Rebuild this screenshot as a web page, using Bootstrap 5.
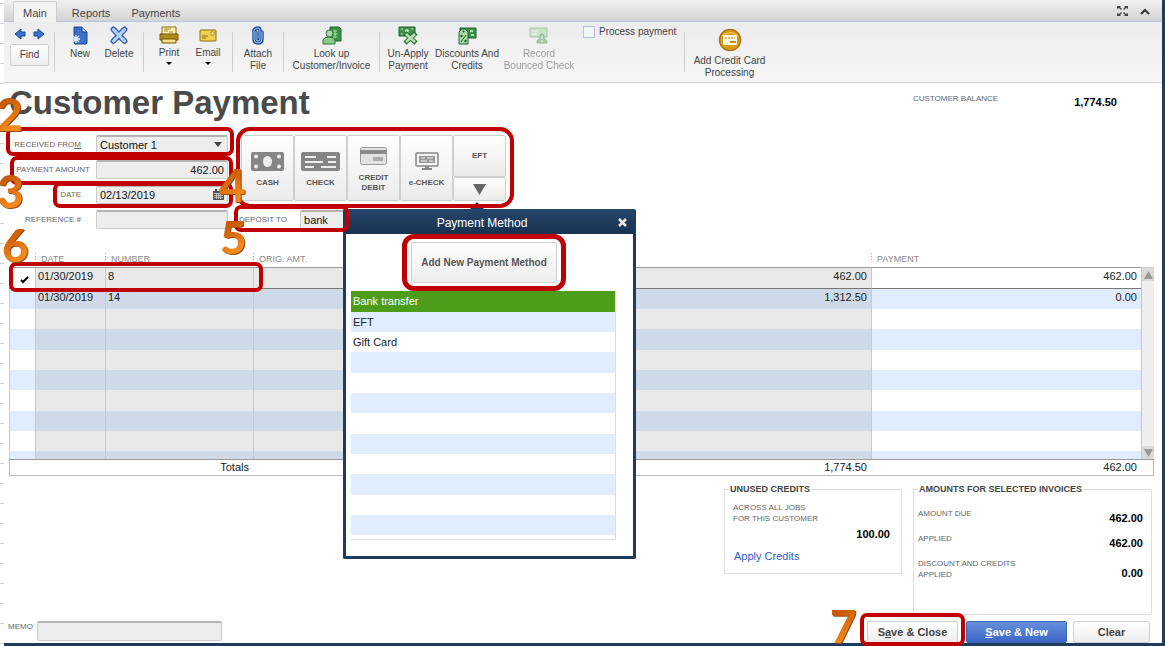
<!DOCTYPE html>
<html lang="en">
<head>
<meta charset="utf-8">
<meta name="viewport" content="width=device-width, initial-scale=1">
<title>Customer Payment</title>
<link href="https://cdn.jsdelivr.net/npm/bootstrap@5.3.0/dist/css/bootstrap.min.css" rel="stylesheet">
<style>
:root{--navy:#1d3d60;--ring:#c00000;--stripe:#e0edff;--fs-s:8px;--fs-h:9px;--fs-t:10px;--fs-m:11px}
body{font-family:"Liberation Sans",Arial,sans-serif;font-size:var(--fs-m);line-height:12px;color:#222;
 background:repeating-linear-gradient(#fff 0 3px,#d2d2d2 3px 4px,#fff 4px 20px);overflow-x:hidden}
.window{margin-left:4px;min-height:100vh;background:#fff;border-right:3px solid var(--navy);border-bottom:3px solid var(--navy)}
button{padding:0;font-family:inherit}
/* tabs */
.tabbar{height:22px;background:linear-gradient(#f1f1f1,#d3d3d3);border-bottom:1px solid #b9c7d8;padding-left:9px}
.tabbar .nav-link{padding:6px 10px 2px 11px;height:20px;color:#444;border-radius:2px 2px 0 0;line-height:12px;margin-top:1px}
.tabbar .nav-link.active{background:#f3f3f3;border:1px solid #ccc;border-bottom:0;padding:5px 9px 2px;height:21px;margin-right:4px}
/* toolbar */
.toolbar{height:61px;background:linear-gradient(#ececec,#f6f6f6);border-bottom:1px solid #cfcfcf;padding:4px 0 0 6px;font-size:var(--fs-t);color:#444}
.tool{border:0;background:none;color:inherit;line-height:12px;flex:none;text-align:center}
.tool svg{display:block;margin:0 auto 3px}
.tool-off{opacity:.5}
.w-s{width:38px}.w-m{width:40px}.w-l{width:72px}.w-x{width:85px}.w-u{width:46px}.w-c{width:79px}.w-p{width:96px}
.rule{width:1px;height:40px;background:#cdcdcd;margin:6px 5px 0;flex:none}
.down{display:block;width:0;margin:3px auto 0;border:3px solid transparent;border-top:3px solid #000}
.plain{border:1px solid #d0d0d0;border-radius:2px;background:linear-gradient(#fff,#ededed);color:#444}
.find{width:39px;height:22px;font-size:var(--fs-t);margin-top:4px}
.form-check-input.process{width:12px;height:12px;margin:0;border:1px solid #b4bee0;border-radius:0;background-color:#f5f5fd}
/* entry area */
.entry-area{padding-left:5px}
.heading{font-size:33px;line-height:40px;font-weight:700;color:#4a4a4a;margin:0}
.balance{gap:76px;margin-right:45px;padding-top:10px}
.cap{font-size:var(--fs-s);line-height:11px;color:#666}
.fields{width:219px;flex:none}
.field-row{height:18px;margin-bottom:7px}
.field-row .cap{width:72px;text-align:right;margin-right:15px;white-space:nowrap;flex:none}
.field-row .cap.wide{width:81px;margin-right:6px}
.entry.form-control,.entry.form-select{height:19px;min-height:0;padding:0 3px;border:1px solid #cbcbcb;border-top:2px solid #b3b3b3;border-radius:2px;background-color:#ededed;font-size:var(--fs-m);line-height:14px;color:#111}
.entry.form-select{background-position:right 5px center;background-size:8px 5px;
 background-image:url("data:image/svg+xml,%3Csvg xmlns='http://www.w3.org/2000/svg' viewBox='0 0 8 5'%3E%3Cpath d='M0 0h8L4 5z' fill='%23444'/%3E%3C/svg%3E")}
.cal{right:4px;top:4px}
.ring{position:absolute;border:4px solid var(--ring);border-radius:7px;pointer-events:none;z-index:6}
.ring-from{inset:-8px -6px -3px -3px}
.ring-amount{inset:-4px -5px -7px 1px}
.ring-date{inset:-3px -5px -5px 44px}
.ring-method{inset:-8px -8px -7px -5px;border-radius:14px}
.ring-deposit{inset:-5px 0 -4px -5px}
.ring-line{left:-1px;top:-6px;width:254px;height:30px}
.ring-add{inset:-8px -9px;border-width:5px;border-radius:12px}
.ring-save{inset:-8px -7px -3px}
.step{position:absolute;z-index:8;font:900 46px/36px Lato,sans-serif;color:transparent;background:linear-gradient(150deg,#c85a08 20%,#f58a1c 80%);-webkit-background-clip:text;background-clip:text;filter:drop-shadow(1px 1px 0 #9a4c10);pointer-events:none}
.step-2{left:-13px;top:-39px}.step-3{left:-12px;top:13px}.step-4{left:-22px;top:32px}
.step-5{left:-19px;top:9px}.step-6{left:-7px;top:-25px}.step-7{left:-37px;top:-13px}
.middle{margin-left:11px;width:267px}
.methods{margin-left:2px;height:66px}
.method{width:53px;height:66px;border:1px solid #cfcfcf;border-radius:2px;background:linear-gradient(#fefefe,#ebebeb);color:#555;font-size:var(--fs-s);font-weight:700;line-height:10px}
.method svg{display:block;margin:0 auto}
.method.half-a{height:42px}.method.half-b{height:24px}
.method .ico{height:26px;display:flex;align-items:center;justify-content:center;margin-bottom:4px}
.deposit{width:110px;height:18px;margin-top:9px}
.deposit .entry{width:49px;margin-left:13px}
/* payment method pop-up */
.popup{position:absolute;left:104px;top:74px;width:293px;border:3px solid var(--navy);border-top:0;background:#fff;z-index:5;border-radius:2px}
.popup::before{content:"";position:absolute;left:124px;top:-14px;border:7px solid transparent;border-bottom-color:var(--navy)}
.popup-head{height:25px;background:linear-gradient(#25466c,#183250);color:#fff;font-size:12px;margin:0 -1px;padding:2px 15px 0 0}
.popup-close{position:absolute;right:6px;top:9px;border:0;background:none;line-height:0}
.add-new{width:146px;height:41px;font-size:var(--fs-t);font-weight:700;color:#555}
.add-wrap{margin:8px 0 8px 65px;width:146px}
.choices{margin:0 17px 16px 5px;border-right:1px solid #ddd;border-bottom:1px solid #ddd;border-radius:0;padding-bottom:4px}
.choices .list-group-item{height:20px;padding:0 2px;border:0;border-radius:0;line-height:20px;color:#222;background:#fff}
.choices .list-group-item:nth-child(3n+1){height:21px}
.choices .list-group-item:nth-child(even){background:var(--stripe)}
.choices .list-group-item.active{background:#4e9d19;color:#fff}
/* invoices */
.sheet{margin:24px 8px 0 5px}
.invoices{width:100%;table-layout:fixed;border-collapse:separate;border-spacing:0}
.invoices th,.invoices td{padding:0 4px 0 2px;line-height:14px;vertical-align:top}
.invoices thead th{height:16px;font-size:var(--fs-h);font-weight:400;color:#8a8a8a;padding-left:6px;border-bottom:1px solid #999}
.invoices thead th+th:not(.bare){background:repeating-linear-gradient(#aaa 0 1px,transparent 1px 3px) 0 1px/1px 9px no-repeat}
.invoices thead th.last{border-bottom-color:#ccc}
.invoices tbody tr{height:20px}
.invoices tbody tr:nth-child(3n+1){height:21px}
.invoices tbody tr:last-child{height:8px}
.invoices tbody td{border-left:1px solid #c8c8c8;padding-top:1px}
.invoices tbody td.mid{background:#e9e9e9}
.invoices tbody tr:nth-child(even) td{background:var(--stripe)}
.invoices tbody tr:nth-child(even) td.mid{background:#cedae8}
.invoices tbody tr:first-child td:not(.bar){border-bottom:1px solid #777}
.invoices tbody td.bar{padding:0;background:#eee;height:191px}
.bar-inner{height:191px}
.bar-end{height:13px;background:#d9d9d9}
.invoices tfoot td{height:17px;border-top:1px solid #999;border-bottom:1px solid #bbb}
.invoices tfoot td:first-child{border-left:1px solid #bbb}
.invoices tfoot td:last-child{border-right:1px solid #bbb}
/* summary boxes */
.summary{margin:8px 10px 0 0;gap:11px}
.group{border:1px solid #e0e0e0;margin:0;padding:0 8px;font-size:var(--fs-s)}
.group legend{float:none;width:auto;font-size:var(--fs-h);line-height:10px;font-weight:700;color:#444;margin:0 0 0 -4px;padding:0 1px}
.g-a{width:178px;height:90px;padding-right:11px}
.g-b{width:239px;height:131px;padding:0 8px 0 4px}
.g-b legend{margin:0 0 14px}
.g-b .line{height:25px}
.line .figure-val{padding-top:4px}
.line .figure-val.low{padding-top:9px}
.figure-val{font-size:var(--fs-m);font-weight:700;color:#000}
.apply{color:#2c5cc5;text-decoration:none;font-size:var(--fs-m);margin:10px 0 0 1px}
.bottom{padding:6px 12px 0 4px;height:28px}
.memo.form-control{width:185px;height:20px}
.act{height:22px;font-size:var(--fs-m);font-weight:700}
.act-close{width:91px}.act-clear{width:77px;margin-left:6px}
.act-new{width:101px;border:1px solid #3a62b5;border-radius:2px;color:#fff;background:linear-gradient(#6590dc,#3b68c4)}
</style>
</head>
<body>
<main class="window d-flex flex-column">
  <header class="tabbar d-flex justify-content-between">
    <nav class="nav">
      <a class="nav-link active" href="#">Main</a>
      <a class="nav-link" href="#">Reports</a>
      <a class="nav-link" href="#">Payments</a>
    </nav>
    <div class="d-flex align-items-center gap-2 pe-2 me-1">
      <button class="border-0 bg-transparent lh-1 me-1" aria-label="Full screen"><svg width="11" height="10" viewBox="0 0 11 10" fill="#444"><path d="M0 0h4L3 1l2 2-1 1-2-2-2 1zM11 0H7l1 1-2 2 1 1 2-2 2 1zM0 10h4L3 9l2-2-1-1-2 2-2-1zM11 10H7l1-1-2-2 1-1 2 2 2-1z"/></svg></button>
      <button class="border-0 bg-transparent lh-1" aria-label="Collapse"><svg width="10" height="7" viewBox="0 0 10 7" fill="none" stroke="#333" stroke-width="2"><path d="M1 6l4-4 4 4"/></svg></button>
    </div>
  </header>

  <div class="toolbar d-flex align-items-start">
    <div class="flex-shrink-0">
      <div class="d-flex justify-content-between px-1">
        <button class="border-0 bg-transparent lh-1" aria-label="Previous"><svg width="12" height="14" viewBox="0 0 12 14"><path d="M1 8l6-5v3h4v4H7v3z" fill="#3d74cf" stroke="#1c4592"/></svg></button>
        <button class="border-0 bg-transparent lh-1" aria-label="Next"><svg width="12" height="14" viewBox="0 0 12 14"><path d="M11 8L5 3v3H1v4h4v3z" fill="#3d74cf" stroke="#1c4592"/></svg></button>
      </div>
      <button class="plain find d-block">Find</button>
    </div>
    <div class="rule"></div>
    <button class="tool w-m"><svg width="18" height="19" viewBox="0 0 18 19"><path d="M3 1h8l5 5v11l-1 1H4l-1-1z" fill="#3b6fc8" stroke="#1d478f"/><path d="M11 1v5h5" fill="#a9c8f5" stroke="#1d478f"/><path d="M5 9v8M1 13h8M2 10l6 6M8 10l-6 6" stroke="#dceaff" stroke-width="1.300"/></svg>New</button>
    <button class="tool w-s"><svg width="18" height="19" viewBox="0 0 18 19"><path d="M3 1c2 0 4 3 6 5 2-2 4-5 6-5l2 2c0 2-3 4-5 6.500 2 2 5 4 5 6l-2 2c-2 0-4-3-6-5-2 2-4 5-6 5l-2-2c0-2 3-4 5-6C4 7 1 5 1 3z" fill="#b5d3fa" stroke="#2e5db0" stroke-width="1.300"/></svg>Delete</button>
    <div class="rule"></div>
    <button class="tool w-m"><svg width="20" height="18" viewBox="0 0 20 18"><path d="M3 9V1h14v8" fill="#fbf1bd" stroke="#8b6a0c"/><path d="M5 3h7M5 5h4M10 6h4" stroke="#a98618"/><path d="M1 8h18v6H1z" fill="#b28b17" stroke="#725506"/><path d="M3 13h14v4H3z" fill="#f4e184" stroke="#725506"/></svg>Print<span class="down"></span></button>
    <button class="tool w-s"><svg width="18" height="18" viewBox="0 0 18 18"><rect x="1" y="4" width="16" height="11" rx="1" fill="#efcf54" stroke="#8d6b0a"/><path d="M3 10h6M3 12h4" stroke="#8d6b0a"/><path d="M12 6h3v3h-3z" fill="#fff4b5" stroke="#a27b0b" stroke-width=".7"/></svg>Email<span class="down"></span></button>
    <div class="rule"></div>
    <button class="tool w-m"><svg width="14" height="19" viewBox="0 0 14 19" fill="none"><path d="M5 6v7q0 2 2 2t2-2V5q0-3-2-3T3 4v9q0 4 4 4t4-4V6" stroke="#24509e" stroke-width="3.500" stroke-linecap="round"/><path d="M5 6v7q0 2 2 2t2-2V5q0-3-2-3T3 4v9q0 4 4 4t4-4V6" stroke="#a6c8f5" stroke-linecap="round"/></svg>Attach<br>File</button>
    <div class="rule"></div>
    <button class="tool w-x"><svg width="20" height="19" viewBox="0 0 20 19"><path d="M8 1h9l2 2v12H8z" fill="#3d9147" stroke="#1f622b"/><path d="M13 4v8M11 5h4M11 8h4M11 11h4" stroke="#a8dba6"/><circle cx="7.500" cy="7.500" r="3.500" fill="#a9dcaa" stroke="#2b7436"/><path d="M1 18v-4q1-3 6-3t6 3v4z" fill="#8ccb8e" stroke="#2b7436"/></svg>Look up<br>Customer/Invoice</button>
    <div class="rule"></div>
    <button class="tool w-u"><svg width="20" height="19" viewBox="0 0 20 19"><path d="M1 1h16v9H1z" fill="#3f8f49" stroke="#1f622b"/><circle cx="9" cy="5" r="2" fill="#b5e0b2"/><path d="M3 3h2M13 3h2M3 8h2" stroke="#b5e0b2"/><path d="M7 7l11 10M18 7L7 17" stroke="#2b7436" stroke-width="4.500"/><path d="M8 8l9 8M17 8l-9 8" stroke="#b8e3b6" stroke-width="2.500"/></svg>Un-Apply<br>Payment</button>
    <button class="tool w-l"><svg width="20" height="19" viewBox="0 0 20 19"><path d="M3 2h16v10H3z" fill="#3f8f49" stroke="#1f622b"/><path d="M13 5h3M14 9h3" stroke="#b5e0b2" stroke-width="2"/><path d="M2 6l3-3h3l3 3v12H2z" fill="#a8d9a8" stroke="#1f622b"/><path d="M9 9l-5 7" stroke="#1f622b"/><circle cx="4.500" cy="10" r="1.200" fill="#1f622b"/><circle cx="8.500" cy="15" r="1.200" fill="#1f622b"/><circle cx="6.500" cy="5.500" r="1" fill="#1f622b"/></svg>Discounts And<br>Credits</button>
    <button class="tool tool-off w-l"><svg width="20" height="19" viewBox="0 0 20 19"><path d="M1 2h17v9H1z" fill="#a8dca8" stroke="#55a05c"/><path d="M3 5h6M3 8h5" stroke="#fff"/><path d="M8 17v-2l3-3V9q2-3 4 0v3l3 3v2z" fill="#61a867" stroke="#3f8546"/><path d="M13 10v3M13 14v2" stroke="#fff"/></svg>Record<br>Bounced Check</button>
    <div class="d-flex align-items-center ms-2 w-p">
      <input class="form-check-input process flex-shrink-0" type="checkbox" id="process">
      <label class="ms-1 text-nowrap" for="process">Process payment</label>
    </div>
    <div class="rule"></div>
    <button class="tool w-c"><svg width="24" height="26" viewBox="0 0 24 26"><circle cx="12" cy="14" r="10.500" fill="#dc9c18" stroke="#a87616" stroke-width="1.500"/><path d="M4 10q8-7 16 0" fill="none" stroke="#f5c85a"/><rect x="5" y="9" width="14" height="10" rx="1" fill="#fff7de"/><path d="M7 12h10" stroke="#c58b14" stroke-dasharray="2 1"/><path d="M12 16h6" stroke="#c58b14" stroke-width="2"/></svg>Add Credit Card<br>Processing</button>
  </div>

  <section class="entry-area">
    <div class="d-flex justify-content-between">
      <h1 class="heading">Customer Payment</h1>
      <div class="balance d-flex align-items-start">
        <span class="cap text-nowrap">CUSTOMER BALANCE</span>
        <strong class="figure-val mt-1 lh-1">1,774.50</strong>
      </div>
    </div>
    <div class="d-flex pt-2 mt-1">
      <form class="fields">
        <div class="field-row d-flex align-items-center position-relative">
          <label class="cap" for="from">RECEIVED FRO<u>M</u></label>
          <select class="form-select entry" id="from"><option>Customer 1</option></select>
          <span class="ring ring-from"></span><span class="step step-2">2</span>
        </div>
        <div class="field-row d-flex align-items-center position-relative">
          <label class="cap wide" for="amount">PAYMENT AMOUNT</label>
          <input class="form-control entry text-end" id="amount" value="462.00">
          <span class="ring ring-amount"></span><span class="step step-3">3</span>
        </div>
        <div class="field-row d-flex align-items-center position-relative">
          <label class="cap" for="date">DATE</label>
          <input class="form-control entry" id="date" value="02/13/2019">
          <svg class="cal position-absolute" width="11" height="11" viewBox="0 0 11 11"><path d="M0 2h11v9H0zM2 0h2v2H2zM7 0h2v2H7z" fill="#555"/><path d="M1 4.500h9M1 6.500h9M1 8.500h9M3.500 4v6M5.500 4v6M7.500 4v6" stroke="#ddd" stroke-width=".7"/></svg>
          <span class="ring ring-date"></span>
        </div>
        <div class="field-row d-flex align-items-center mb-0">
          <label class="cap" for="ref">REFERENCE #</label>
          <input class="form-control entry" id="ref">
        </div>
      </form>
      <div class="middle position-relative">
        <div class="methods d-flex position-relative">
          <button class="method"><span class="ico"><svg width="33" height="19" viewBox="0 0 33 19"><rect x="0" y="0" width="33" height="19" rx="2" fill="#858585"/><ellipse cx="16.500" cy="9.500" rx="4.500" ry="5.500" fill="#eee"/><g fill="#eee"><circle cx="5" cy="4.500" r="2"/><circle cx="5" cy="14.500" r="2"/><circle cx="28" cy="4.500" r="2"/><circle cx="28" cy="14.500" r="2"/></g></svg></span>CASH</button>
          <button class="method"><span class="ico"><svg width="39" height="19" viewBox="0 0 39 19"><rect width="39" height="19" rx="2" fill="#858585"/><path d="M4 5h11M26 5h9M4 10h18M27 10h8M4 15h9M20 15h15" stroke="#eee" stroke-width="2"/></svg></span>CHECK</button>
          <button class="method"><span class="ico"><svg width="27" height="18" viewBox="0 0 27 18"><rect x=".5" y=".5" width="26" height="17" rx="2" fill="#e2e2e2" stroke="#999"/><path d="M0 5h27" stroke="#8a8a8a" stroke-width="4"/><path d="M13 12h10" stroke="#aaa" stroke-width="4"/></svg></span>CREDIT<br>DEBIT</button>
          <button class="method"><span class="ico"><svg width="24" height="18" viewBox="0 0 24 18"><rect x="1" y="1" width="22" height="13" rx="1" fill="#f3f3f3" stroke="#888" stroke-width="1.500"/><rect x="4" y="4" width="16" height="7" fill="#999"/><path d="M6 6h4M12 6h6M6 9h6M14 9h4" stroke="#eee"/><path d="M10 14h4v2h3v2H7v-2h3z" fill="#888"/></svg></span>e-CHECK</button>
          <div class="d-flex flex-column">
            <button class="method half-a">EFT</button>
            <button class="method half-b" aria-label="More methods"><svg width="13" height="11" viewBox="0 0 13 11"><path d="M0 0h13L6.500 11z" fill="#666"/></svg></button>
          </div>
          <span class="ring ring-method"></span><span class="step step-4">4</span>
        </div>
        <div class="deposit d-flex align-items-center position-relative">
          <label class="cap text-nowrap" for="deposit">DEPOSIT TO</label>
          <input class="form-control entry" id="deposit" value="bank">
          <span class="ring ring-deposit"></span><span class="step step-5">5</span>
        </div>
        <div class="popup" role="dialog" aria-label="Payment Method">
          <div class="popup-head d-flex align-items-center justify-content-center">Payment Method</div>
          <button class="popup-close" aria-label="Close"><svg width="9" height="9" viewBox="0 0 9 9" stroke="#e8e8e8" stroke-width="2.500"><path d="M1 1l7 7M8 1L1 8"/></svg></button>
          <div class="add-wrap position-relative"><button class="plain add-new d-block">Add New Payment Method</button><span class="ring ring-add"></span></div>
          <ul class="choices list-group">
            <li class="list-group-item active">Bank transfer</li><li class="list-group-item">EFT</li><li class="list-group-item">Gift Card</li>
            <li class="list-group-item"></li><li class="list-group-item"></li><li class="list-group-item"></li><li class="list-group-item"></li><li class="list-group-item"></li><li class="list-group-item"></li><li class="list-group-item"></li><li class="list-group-item"></li><li class="list-group-item"></li>
          </ul>
        </div>
      </div>
    </div>
  </section>

  <section class="sheet position-relative">
    <table class="invoices">
      <colgroup><col style="width:26px"><col style="width:70px"><col style="width:148px"><col><col style="width:270px"><col style="width:13px"></colgroup>
      <thead><tr><th class="position-relative"><span class="step step-6">6</span></th><th>DATE</th><th>NUMBER</th><th>ORIG. AMT.</th><th>PAYMENT</th><th class="bare last"></th></tr></thead>
      <tbody>
        <tr><td class="position-relative"><svg class="ms-2 mt-1" width="9" height="9" viewBox="0 0 9 9" fill="none" stroke="#000" stroke-width="2"><path d="M1 5l2 2 5-5"/></svg><span class="ring ring-line"></span></td><td class="mid">01/30/2019</td><td class="mid">8</td><td class="mid text-end">462.00</td><td class="text-end">462.00</td>
          <td class="bar" rowspan="10"><div class="bar-inner d-flex flex-column justify-content-between">
            <div class="bar-end d-flex align-items-center justify-content-center"><svg width="9" height="8" viewBox="0 0 9 8"><path d="M0 8h9L4.500 0z" fill="#999"/></svg></div>
            <div class="bar-end d-flex align-items-center justify-content-center"><svg width="9" height="8" viewBox="0 0 9 8"><path d="M0 0h9L4.500 8z" fill="#999"/></svg></div></div></td></tr>
        <tr><td></td><td class="mid">01/30/2019</td><td class="mid">14</td><td class="mid text-end">1,312.50</td><td class="text-end">0.00</td></tr>
        <tr><td></td><td class="mid"></td><td class="mid"></td><td class="mid"></td><td></td></tr>
        <tr><td></td><td class="mid"></td><td class="mid"></td><td class="mid"></td><td></td></tr>
        <tr><td></td><td class="mid"></td><td class="mid"></td><td class="mid"></td><td></td></tr>
        <tr><td></td><td class="mid"></td><td class="mid"></td><td class="mid"></td><td></td></tr>
        <tr><td></td><td class="mid"></td><td class="mid"></td><td class="mid"></td><td></td></tr>
        <tr><td></td><td class="mid"></td><td class="mid"></td><td class="mid"></td><td></td></tr>
        <tr><td></td><td class="mid"></td><td class="mid"></td><td class="mid"></td><td></td></tr>
        <tr><td></td><td class="mid"></td><td class="mid"></td><td class="mid"></td><td></td></tr>
      </tbody>
      <tfoot><tr><td></td><td></td><td class="text-end">Totals</td><td class="text-end">1,774.50</td><td class="text-end">462.00</td><td></td></tr></tfoot>
    </table>
  </section>

  <section class="summary d-flex justify-content-end align-items-start">
    <fieldset class="group g-a">
      <legend>UNUSED CREDITS</legend>
      <div class="cap pt-2">ACROSS ALL JOBS<br>FOR THIS CUSTOMER</div>
      <div class="figure-val text-end pt-1">100.00</div>
      <a class="apply d-inline-block" href="#">Apply Credits</a>
    </fieldset>
    <fieldset class="group g-b">
      <legend>AMOUNTS FOR SELECTED INVOICES</legend>
      <div class="line d-flex justify-content-between"><span class="cap">AMOUNT DUE</span><span class="figure-val">462.00</span></div>
      <div class="line d-flex justify-content-between"><span class="cap">APPLIED</span><span class="figure-val">462.00</span></div>
      <div class="line d-flex justify-content-between"><span class="cap">DISCOUNT AND CREDITS<br>APPLIED</span><span class="figure-val low">0.00</span></div>
    </fieldset>
  </section>

  <footer class="bottom d-flex align-items-start mt-auto">
    <label class="cap me-1" for="memo">MEMO</label>
    <input class="form-control entry memo" id="memo">
    <div class="position-relative ms-auto me-2">
      <span class="step step-7">7</span>
      <button class="plain act act-close d-block">S<u>a</u>ve &amp; Close</button><span class="ring ring-save"></span>
    </div>
    <button class="act act-new"><u>S</u>ave &amp; New</button>
    <button class="plain act act-clear">Clear</button>
  </footer>
</main>
<script src="https://cdn.jsdelivr.net/npm/bootstrap@5.3.0/dist/js/bootstrap.bundle.min.js"></script>
</body>
</html>
